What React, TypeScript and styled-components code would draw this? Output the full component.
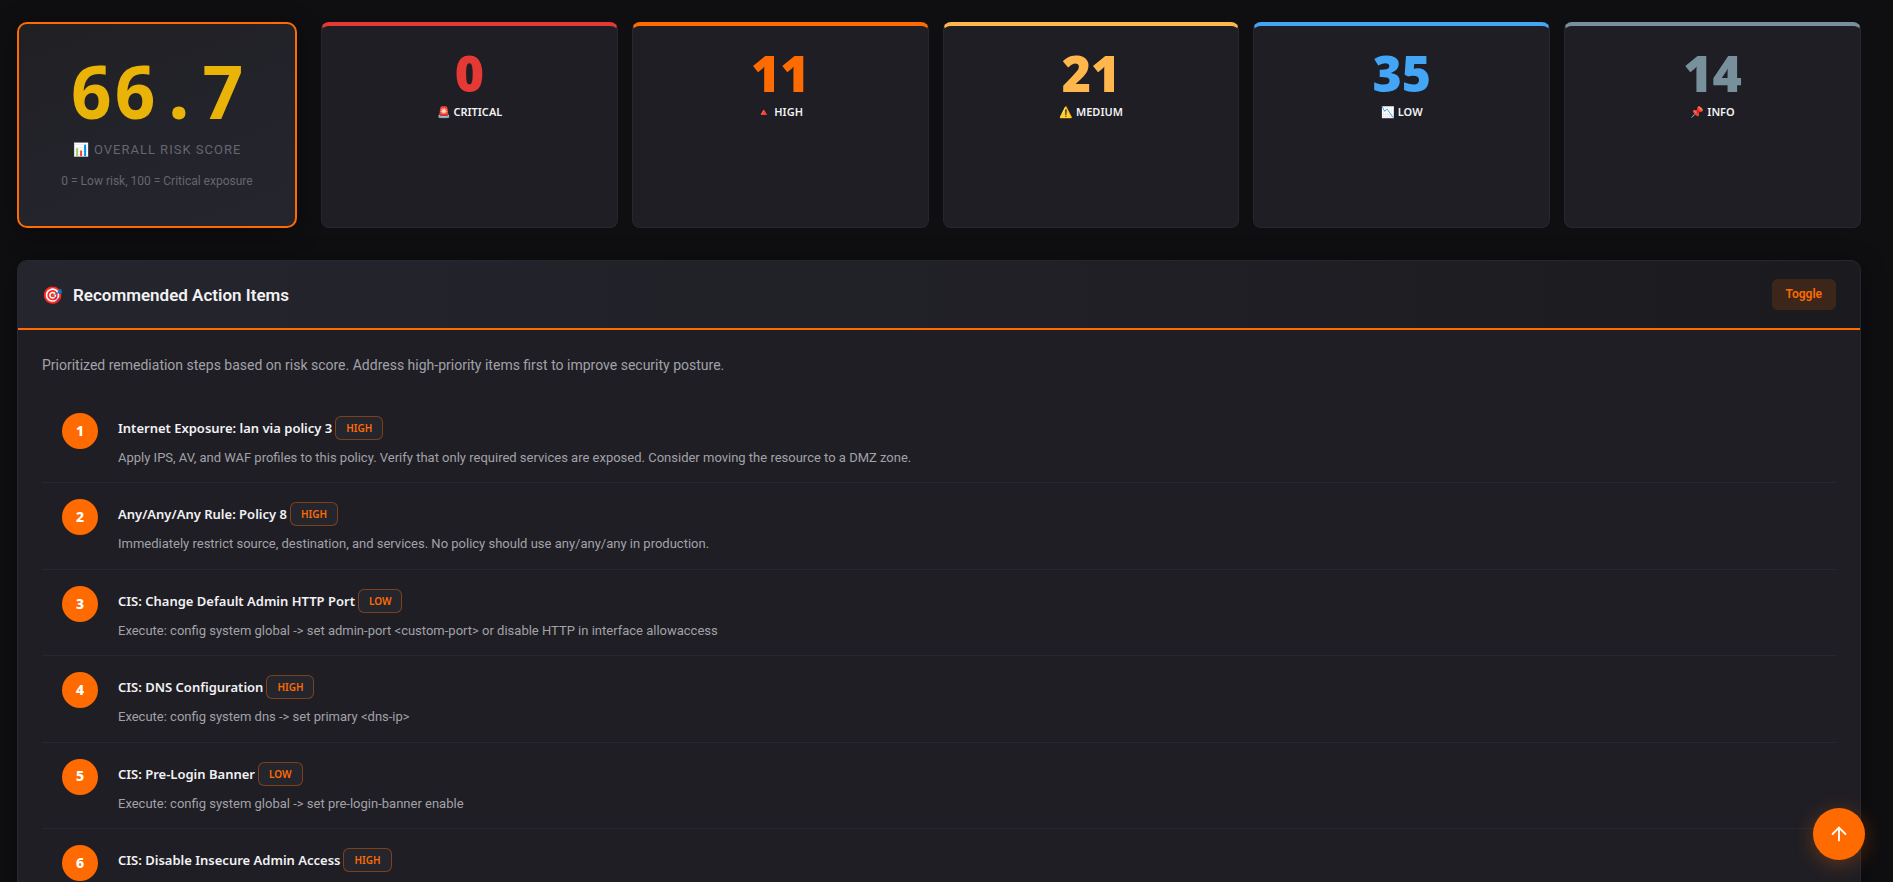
import React, { useState } from "react";
import styled, { createGlobalStyle } from "styled-components";
import { ArrowUp } from "lucide-react";

const colors = {
  page: "#0f0f11",
  card: "#1f1e24",
  raised: "#25252e",
  line: "#272731",
  text: "#f2f2f4",
  muted: "#a2a2a8",
  faint: "#66666f",
  accent: "#ff6b00",
  score: "#eab308",
};

const GlobalStyle = createGlobalStyle`
  *, *::before, *::after { box-sizing: border-box; }
  html { background: ${colors.page}; scrollbar-width: none; }
  body {
    margin: 0;
    color: ${colors.text};
    font-family: Roboto, "Noto Sans", sans-serif;
    font-size: 14px;
    line-height: 1.6;
  }
  h2, h3, p, ol { margin: 0; padding: 0; }
`;

const Page = styled.main`
  display: flex;
  flex-direction: column;
  gap: 32px;
  padding: 22px 32px 32px 17px;
`;

const Overview = styled.section`
  display: grid;
  grid-template-columns: 280px 1fr;
  gap: 24px;
`;

const ScoreCard = styled.div`
  display: flex;
  flex-direction: column;
  align-items: center;
  padding: 30px 24px 32px;
  border: 2px solid ${colors.accent};
  border-radius: 10px;
  background: linear-gradient(160deg, #202023, #23232b 50%, ${colors.raised});
  box-shadow: 0 4px 24px rgba(0, 0, 0, 0.4);
`;

const ScoreValue = styled.div`
  color: ${colors.score};
  font-family: "Noto Sans Mono", "DejaVu Sans Mono", monospace;
  font-size: 73px;
  font-weight: 700;
  line-height: 74px;
`;

const ScoreLabel = styled.div`
  margin-top: 12px;
  color: ${colors.faint};
  font-size: 13px;
  line-height: 20px;
  letter-spacing: 1px;
  text-transform: uppercase;
`;

const ScoreHint = styled.div`
  margin-top: 12px;
  color: ${colors.faint};
  font-size: 12px;
  line-height: 18px;
`;

const Severities = styled.div`
  display: grid;
  grid-template-columns: repeat(5, 1fr);
  gap: 14px;
`;

const SeverityCard = styled.div<{ $tone: string }>`
  min-height: 206px;
  padding: 22px 16px;
  border: 1px solid ${colors.line};
  border-top: 4px solid ${(p) => p.$tone};
  border-radius: 8px;
  background: ${colors.card};
  text-align: center;
`;

const SeverityCount = styled.div<{ $tone: string }>`
  color: ${(p) => p.$tone};
  font-family: "Open Sans", "Noto Sans", sans-serif;
  font-size: 50px;
  font-weight: 800;
  line-height: 50px;
`;

const SeverityLabel = styled.div`
  margin-top: 5px;
  font-family: "Noto Sans", sans-serif;
  font-size: 11px;
  font-weight: 600;
  line-height: 18px;
`;

const Panel = styled.section`
  overflow: hidden;
  border: 1px solid ${colors.line};
  border-radius: 10px;
  background: ${colors.card};
  box-shadow: 0 4px 24px rgba(0, 0, 0, 0.4);
`;

const PanelHeader = styled.header`
  display: flex;
  align-items: center;
  justify-content: space-between;
  padding: 18px 24px;
  border-bottom: 2px solid ${colors.accent};
  background: linear-gradient(90deg, ${colors.raised}, #1b1b1f);
`;

const PanelTitle = styled.h2`
  display: flex;
  align-items: center;
  gap: 10px;
  font-size: 17px;
  font-weight: 600;
  line-height: 26px;
`;

const ToggleButton = styled.button`
  padding: 6px 14px;
  border: 0;
  border-radius: 6px;
  background: rgba(255, 107, 0, 0.15);
  color: ${colors.accent};
  font: 600 12px/19px Roboto, "Noto Sans", sans-serif;
  cursor: pointer;
`;

const PanelBody = styled.div`
  padding: 24px;
`;

const Intro = styled.p`
  margin-bottom: 20px;
  color: ${colors.muted};
  font-size: 14px;
  line-height: 23px;
`;

const ActionList = styled.ol`
  list-style: none;
`;

const ActionItem = styled.li`
  display: flex;
  gap: 20px;
  padding: 16px 20px 13px;
  border-bottom: 1px solid ${colors.line};
`;

const Rank = styled.span`
  display: flex;
  flex: none;
  align-items: center;
  justify-content: center;
  width: 36px;
  height: 36px;
  border-radius: 50%;
  background: ${colors.accent};
  color: #fff;
  font-family: "Noto Sans", sans-serif;
  font-size: 14px;
  font-weight: 800;
`;

const ActionTitle = styled.h3`
  display: flex;
  align-items: center;
  gap: 3px;
  height: 30px;
  margin-bottom: 3px;
  font-family: "Noto Sans", sans-serif;
  font-size: 13px;
  font-weight: 600;
  line-height: 20px;
`;

const Badge = styled.span`
  padding: 2px 10px;
  border: 1px solid rgba(255, 107, 0, 0.4);
  border-radius: 6px;
  background: ${colors.raised};
  color: ${colors.accent};
  font-size: 10px;
  line-height: 18px;
`;

const ActionText = styled.p`
  color: ${colors.muted};
  font-size: 13px;
  line-height: 1.8;
`;

const BackToTop = styled.button`
  position: fixed;
  right: 28px;
  bottom: 22px;
  display: flex;
  align-items: center;
  justify-content: center;
  width: 52px;
  height: 52px;
  padding: 0;
  border: 0;
  border-radius: 50%;
  background: ${colors.accent};
  color: #fff;
  box-shadow: 0 4px 20px rgba(255, 107, 0, 0.3);
  cursor: pointer;
`;

const severities = [
  { icon: "🚨", name: "CRITICAL", count: 0, tone: "#e53935" },
  { icon: "🔺", name: "HIGH", count: 11, tone: "#ff6b00" },
  { icon: "⚠️", name: "MEDIUM", count: 21, tone: "#ffb74d" },
  { icon: "📉", name: "LOW", count: 35, tone: "#42a5f5" },
  { icon: "📌", name: "INFO", count: 14, tone: "#78909c" },
];

const actions = [
  {
    title: "Internet Exposure: lan via policy 3",
    level: "HIGH",
    text: "Apply IPS, AV, and WAF profiles to this policy. Verify that only required services are exposed. Consider moving the resource to a DMZ zone.",
  },
  {
    title: "Any/Any/Any Rule: Policy 8",
    level: "HIGH",
    text: "Immediately restrict source, destination, and services. No policy should use any/any/any in production.",
  },
  {
    title: "CIS: Change Default Admin HTTP Port",
    level: "LOW",
    text: "Execute: config system global -> set admin-port <custom-port> or disable HTTP in interface allowaccess",
  },
  {
    title: "CIS: DNS Configuration",
    level: "HIGH",
    text: "Execute: config system dns -> set primary <dns-ip>",
  },
  {
    title: "CIS: Pre-Login Banner",
    level: "LOW",
    text: "Execute: config system global -> set pre-login-banner enable",
  },
  { title: "CIS: Disable Insecure Admin Access", level: "HIGH", text: "" },
];

export default function App() {
  const [open, setOpen] = useState(true);
  return (
    <>
      <GlobalStyle />
      <Page>
        <Overview>
          <ScoreCard>
            <ScoreValue>66.7</ScoreValue>
            <ScoreLabel>📊 Overall Risk Score</ScoreLabel>
            <ScoreHint>0 = Low risk, 100 = Critical exposure</ScoreHint>
          </ScoreCard>
          <Severities>
            {severities.map((s) => (
              <SeverityCard key={s.name} $tone={s.tone}>
                <SeverityCount $tone={s.tone}>{s.count}</SeverityCount>
                <SeverityLabel>
                  {s.icon} {s.name}
                </SeverityLabel>
              </SeverityCard>
            ))}
          </Severities>
        </Overview>
        <Panel>
          <PanelHeader>
            <PanelTitle>
              <span>🎯</span>
              <span>Recommended Action Items</span>
            </PanelTitle>
            <ToggleButton type="button" aria-expanded={open} onClick={() => setOpen(!open)}>
              Toggle
            </ToggleButton>
          </PanelHeader>
          {open && (
            <PanelBody>
              <Intro>
                Prioritized remediation steps based on risk score. Address high-priority items first
                to improve security posture.
              </Intro>
              <ActionList>
                {actions.map((a, i) => (
                  <ActionItem key={a.title}>
                    <Rank>{i + 1}</Rank>
                    <div>
                      <ActionTitle>
                        <span>{a.title}</span>
                        <Badge>{a.level}</Badge>
                      </ActionTitle>
                      {a.text && <ActionText>{a.text}</ActionText>}
                    </div>
                  </ActionItem>
                ))}
              </ActionList>
            </PanelBody>
          )}
        </Panel>
      </Page>
      <BackToTop type="button" aria-label="Back to top" onClick={() => window.scrollTo({ top: 0 })}>
        <ArrowUp size={22} strokeWidth={2} />
      </BackToTop>
    </>
  );
}
